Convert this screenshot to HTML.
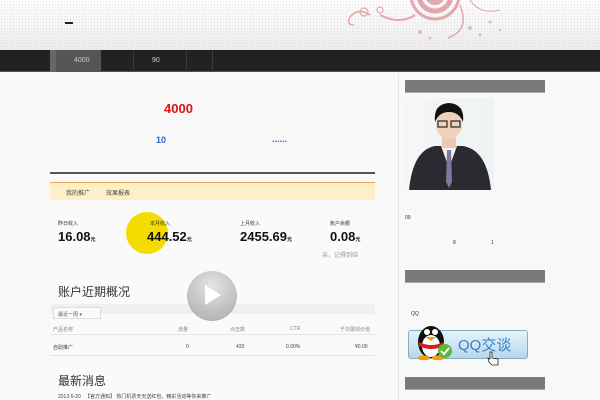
<!DOCTYPE html>
<html><head><meta charset="utf-8"><style>
*{margin:0;padding:0;box-sizing:border-box}
body{width:600px;height:400px;overflow:hidden;background:#f8f8f8;font-family:"Liberation Sans","Noto Sans CJK SC",sans-serif;position:relative}
.a{position:absolute}
.hdr{left:0;top:0;width:600px;height:50px;background:linear-gradient(#fdfdfd,#ececec);}
.hdr:after{content:"";position:absolute;inset:0;background-image:radial-gradient(#d8d8d8 0.6px,transparent 0.8px);background-size:3px 3px;opacity:.7}
.nav{left:0;top:50px;width:600px;height:22px;background:#222;border-bottom:1px solid #555}
.t{font-size:7px;color:#ccc}
.bar{left:405px;width:140px;height:13px;background:#7a7a7a;border-bottom:1px solid #aaa}
.v{left:50px;top:170px;width:325px;height:230px;background:#fafafa;overflow:hidden}
.s{font-size:5px;color:#888}
</style></head><body>
<div class="a hdr"></div>
<svg class="a" style="left:320px;top:0" width="200" height="50" viewBox="0 0 200 50">
<g fill="none" stroke="#e3a6ac" stroke-width="3">
<circle cx="115" cy="-5" r="24"/><circle cx="115" cy="-5" r="16" stroke-width="5"/>
<path d="M95 15 Q80 25 60 15" stroke-width="2"/>
<path d="M50 15 q-12 -8 -20 2 q-4 8 4 8" stroke-width="1.5"/>
<circle cx="44" cy="12" r="4" stroke-width="1.2"/><circle cx="60" cy="10" r="3" stroke-width="1.2"/>
<path d="M140 5 Q150 30 128 38" stroke-width="1.5"/>
<path d="M150 0 q10 15 30 10" stroke-width="1"/>
</g>
<g fill="#e8b8bc"><circle cx="150" cy="28" r="2"/><circle cx="160" cy="35" r="1.5"/><circle cx="170" cy="22" r="1.5"/><circle cx="180" cy="30" r="1.2"/><circle cx="100" cy="32" r="2"/><circle cx="110" cy="38" r="1.5"/></g>
<circle cx="115" cy="-5" r="10" fill="#e5a9ae"/>
</svg>
<div class="a" style="left:65px;top:22px;width:8px;height:2px;background:#222"></div>
<div class="a nav"></div>
<div class="a" style="left:50px;top:50px;width:6px;height:22px;background:#666"></div>
<div class="a" style="left:56px;top:50px;width:45px;height:22px;background:#555"></div>
<div class="a t" style="left:74px;top:57px">4000</div>
<div class="a" style="left:133px;top:50px;width:1px;height:22px;background:#3a3a3a"></div>
<div class="a t" style="left:152px;top:57px">90</div>
<div class="a" style="left:186px;top:50px;width:1px;height:22px;background:#3a3a3a"></div>
<div class="a" style="left:212px;top:50px;width:1px;height:22px;background:#3a3a3a"></div>
<div class="a" style="left:398px;top:73px;width:1px;height:327px;background:#e6e6e6"></div>
<div class="a" style="left:164px;top:101px;font-size:13px;font-weight:bold;color:#e01010">4000</div>
<div class="a" style="left:156px;top:135px;font-size:9px;font-weight:bold;color:#3b63c4">10</div>
<div class="a" style="left:272px;top:134px;font-size:9px;font-weight:bold;color:#3b63c4">......</div>
<div class="a v">
<div class="a" style="left:0;top:2px;width:325px;height:2px;background:#555"></div>
<div class="a" style="left:0;top:12px;width:325px;height:1px;background:#f0a050"></div>
<div class="a" style="left:0;top:13px;width:325px;height:17px;background:#fdf0c8"></div>
<div class="a" style="left:16px;top:18px;font-size:6px;color:#444">我的推广</div>
<div class="a" style="left:56px;top:18px;font-size:6px;color:#444">效果报表</div>
<div class="a" style="left:76px;top:42px;width:42px;height:42px;border-radius:50%;background:#f5dc00"></div>
<div class="a s" style="left:8px;top:50px;color:#333">昨日收入</div>
<div class="a s" style="left:100px;top:50px;color:#333">本月收入</div>
<div class="a s" style="left:190px;top:50px;color:#333">上月收入</div>
<div class="a s" style="left:280px;top:50px;color:#333">账户余额</div>
<div class="a" style="left:8px;top:59px;font-size:13px;font-weight:bold;color:#111">16.08<span style="font-size:5px">元</span></div>
<div class="a" style="left:97px;top:59px;font-size:13px;font-weight:bold;color:#111">444.52<span style="font-size:5px">元</span></div>
<div class="a" style="left:190px;top:59px;font-size:13px;font-weight:bold;color:#111">2455.69<span style="font-size:5px">元</span></div>
<div class="a" style="left:280px;top:59px;font-size:13px;font-weight:bold;color:#111">0.08<span style="font-size:5px">元</span></div>
<div class="a" style="left:272px;top:80px;font-size:6px;color:#999">亲，记得到结</div>
<div class="a" style="left:8px;top:113px;font-size:12px;color:#333">账户近期概况</div>
<div class="a" style="left:0;top:134px;width:325px;height:10px;background:#f0f0f0"></div>
<div class="a" style="left:137px;top:101px;width:50px;height:50px;border-radius:50%;background:radial-gradient(circle at 50% 30%,#e2e2e2,#a0a0a0);opacity:.9"></div>
<svg class="a" style="left:153px;top:113px" width="20" height="24"><path d="M2 2 L18 12 L2 22Z" fill="#fff"/></svg>
<div class="a" style="left:3px;top:137px;width:48px;height:12px;border:1px solid #ddd;background:#fafafa;font-size:5px;color:#555;padding:3px 4px">最近一周 ▾</div>
<div class="a s" style="left:3px;top:156px">产品名称</div>
<div class="a s" style="left:128px;top:156px">流量</div>
<div class="a s" style="left:180px;top:156px">点击数</div>
<div class="a s" style="left:240px;top:156px">CTR</div>
<div class="a s" style="left:290px;top:156px">千次展现价值</div>
<div class="a" style="left:0;top:164px;width:325px;height:1px;background:#e5e5e5"></div>
<div class="a s" style="left:3px;top:174px;color:#444">自助推广</div>
<div class="a s" style="left:136px;top:174px;color:#444">0</div>
<div class="a s" style="left:186px;top:174px;color:#444">433</div>
<div class="a s" style="left:236px;top:174px;color:#444">0.00%</div>
<div class="a s" style="left:305px;top:174px;color:#444">¥0.00</div>
<div class="a" style="left:0;top:185px;width:325px;height:1px;background:#e5e5e5"></div>
<div class="a" style="left:8px;top:202px;font-size:12px;color:#333">最新消息</div>
<div class="a s" style="left:8px;top:223px;color:#444">2013-5-20 &nbsp; 【官方通知】 热门机票天天送红包，精彩活动等你来推广</div>
</div>
<div class="a bar" style="top:80px"></div>
<div class="a" style="left:405px;top:98px;width:89px;height:92px;background:linear-gradient(90deg,#f6f6f6,#eef3f3)"></div>
<svg class="a" style="left:405px;top:98px" width="89" height="92">
<path d="M4 92 Q8 52 30 48 L58 48 Q82 52 86 92Z" fill="#2a2a30"/>
<path d="M36 48 L44 70 L52 48Z" fill="#f2f2f2"/>
<path d="M42 52 L46 52 L47 84 L44 90 L41 84Z" fill="#7a7a9a"/>
<rect x="37" y="34" width="14" height="16" fill="#e9c9b2"/>
<ellipse cx="44" cy="26" rx="13" ry="15" fill="#f0d2bc"/>
<path d="M30 24 Q28 6 44 5 Q60 6 58 24 Q54 14 44 14 Q34 14 30 24Z" fill="#111"/>
<rect x="33" y="23" width="9" height="6" fill="none" stroke="#333" stroke-width="1.3"/>
<rect x="46" y="23" width="9" height="6" fill="none" stroke="#333" stroke-width="1.3"/>
</svg>
<div class="a" style="left:405px;top:215px;font-size:5px;color:#333">09</div>
<div class="a" style="left:453px;top:240px;font-size:5px;color:#333">8</div>
<div class="a" style="left:491px;top:240px;font-size:5px;color:#333">1</div>
<div class="a bar" style="top:270px"></div>
<div class="a" style="left:411px;top:311px;font-size:5px;color:#333">QQ</div>
<div class="a" style="left:408px;top:330px;width:120px;height:29px;border:1px solid #8ab;border-radius:3px;background:linear-gradient(#e6f3fb,#b5d7ee)"></div>
<div class="a" style="left:458px;top:334px;font-size:15px;color:#3a7fc0">QQ交谈</div>
<svg class="a" style="left:414px;top:318px" width="44" height="42">
<ellipse cx="17" cy="24" rx="13" ry="16" fill="#111"/>
<ellipse cx="17" cy="28" rx="9" ry="11" fill="#fff"/>
<circle cx="13" cy="14" r="3" fill="#fff"/><circle cx="21" cy="14" r="3" fill="#fff"/>
<path d="M12 19 L22 19 L17 23Z" fill="#f5a000"/>
<path d="M5 24 Q17 30 30 24 L30 28 Q17 34 5 28Z" fill="#d81c1c"/>
<ellipse cx="10" cy="40" rx="6" ry="2.5" fill="#f5a000"/><ellipse cx="24" cy="40" rx="6" ry="2.5" fill="#f5a000"/>
<circle cx="31" cy="33" r="7" fill="#5cb83a"/>
<path d="M27 33 L30 36 L35 30" stroke="#fff" stroke-width="1.8" fill="none"/>
</svg>
<svg class="a" style="left:486px;top:350px" width="14" height="16"><path d="M4 2 L4 9 L2 8 L3 12 L6 15 L12 15 L12 9 L6 8 L6 2Z" fill="#fff" stroke="#222" stroke-width="0.8"/></svg>
<div class="a bar" style="top:377px"></div>
</body></html>
